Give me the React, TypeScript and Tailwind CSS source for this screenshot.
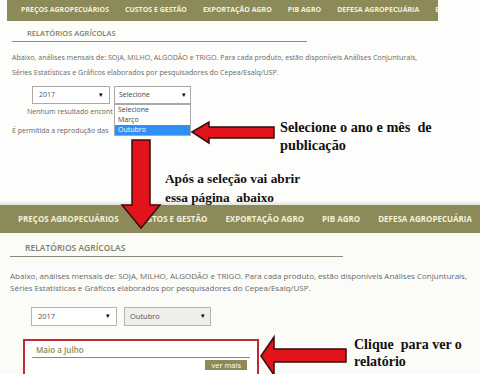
export default function App() {
  const nav = ['PREÇOS AGROPECUÁRIOS', 'CUSTOS E GESTÃO', 'EXPORTAÇÃO AGRO', 'PIB AGRO', 'DEFESA AGROPECUÁRIA']
  const sans = { fontFamily: '"Open Sans", "Noto Sans", sans-serif' }
  const serif = { fontFamily: '"Liberation Serif", "Times New Roman", serif' }

  return (
    <div className="relative w-[480px] h-[374px] overflow-hidden bg-[#fdfdfc]" style={sans}>
      {/* primeira tela */}
      <div className="relative h-[200px]">
        <div className="ml-[7px] w-[431px] h-[21px] bg-[#8b8a58] flex items-center pl-[14px] gap-[16px] overflow-hidden">
          {nav.map(n => (
            <span key={n} className="text-[7px] font-bold text-[#f3f1dc] whitespace-nowrap">{n}</span>
          ))}
          <span className="text-[7px] font-bold text-[#f3f1dc]">E</span>
        </div>
        <div className="ml-[12px] w-[295px] border-b border-[#8d8c78] pl-[15px] pt-[7px] pb-[3px] text-[7.5px] leading-[10px] font-semibold text-[#7d7c62]">
          RELATÓRIOS AGRÍCOLAS
        </div>
        <p className="ml-[12px] mt-[8px] text-[7.1px] leading-[15px] text-[#6a6a6a] whitespace-nowrap">
          Abaixo, análises mensais de: SOJA, MILHO, ALGODÃO e TRIGO. Para cada produto, estão disponíveis Análises Conjunturais,<br />
          Séries Estatísticas e Gráficos elaborados por pesquisadores do Cepea/Esalq/USP.
        </p>
        <div className="ml-[32px] mt-[6px] flex gap-[4px]">
          <div className="w-[78px] h-[18px] border border-[#a9a9a9] bg-white flex items-center justify-between px-[6px]">
            <span className="text-[7px] text-[#555]">2017</span>
            <span className="text-[7px] text-black">▾</span>
          </div>
          <div className="w-[77px] h-[18px] border border-[#a9a9a9] bg-white flex items-center justify-between px-[4px]">
            <span className="text-[7px] text-[#444]">Selecione</span>
            <span className="text-[7px] text-black">▾</span>
          </div>
        </div>
        <div className="ml-[27px] mt-[3px] w-[87px] overflow-hidden text-[7px] leading-[10px] text-[#666] whitespace-nowrap">Nenhum resultado encont</div>
        <div className="ml-[12px] mt-[9px] w-[102px] overflow-hidden text-[7px] leading-[10px] text-[#666] whitespace-nowrap">É permitida a reprodução das</div>

        {/* lista aberta do select */}
        <div className="absolute left-[114px] top-[104px] w-[77px] border border-[#a9a9a9] bg-white text-[7px] leading-[10px]">
          <div className="px-[3px] text-[#444]">Selecione</div>
          <div className="px-[3px] text-[#444]">Março</div>
          <div className="px-[3px] bg-[#2f8ff2] text-white">Outubro</div>
        </div>

        <p className="absolute left-[280px] top-[118px] text-[14.3px] leading-[18px] font-bold text-[#111] whitespace-nowrap" style={serif}>
          Selecione o ano e mês&nbsp; de<br />publicação
        </p>
        <p className="absolute left-[165px] top-[169px] text-[13.3px] leading-[19px] font-bold text-[#111] whitespace-nowrap" style={serif}>
          Após a seleção vai abrir<br />essa página&nbsp; abaixo
        </p>
      </div>
      <div className="h-[5px] bg-gradient-to-b from-[#fdfdfc] to-[#e4e4df]" />

      {/* segunda tela */}
      <div className="bg-[#fbfbf8] h-[169px]">
        <div className="h-[28px] bg-[#8b8a58] flex items-center pl-[18px] gap-[18px] overflow-hidden">
          {nav.map(n => (
            <span key={n} className="text-[8px] font-bold text-[#f3f1dc] whitespace-nowrap">{n}</span>
          ))}
        </div>
        <div className="ml-[10px] w-[333px] border-b border-[#8d8c78] pl-[15px] pt-[9px] pb-[3px] text-[8.5px] leading-[11px] font-semibold text-[#7d7c62]">
          RELATÓRIOS AGRÍCOLAS
        </div>
        <p className="ml-[10px] mt-[13px] text-[8px] leading-[12px] text-[#6a6a6a] whitespace-nowrap">
          Abaixo, análises mensais de: SOJA, MILHO, ALGODÃO e TRIGO. Para cada produto, estão disponíveis Análises Conjunturais,<br />
          Séries Estatísticas e Gráficos elaborados por pesquisadores do Cepea/Esalq/USP.
        </p>
        <div className="ml-[31px] mt-[13px] flex gap-[7px]">
          <div className="w-[86px] h-[19px] border border-[#b5b5b0] bg-white flex items-center justify-between px-[6px]">
            <span className="text-[7.5px] text-[#555]">2017</span>
            <span className="text-[7px] text-black">▾</span>
          </div>
          <div className="w-[87px] h-[19px] border border-[#b5b5b0] bg-[#eeeeea] flex items-center justify-between px-[5px]">
            <span className="text-[7.5px] text-[#555]">Outubro</span>
            <span className="text-[7px] text-black">▾</span>
          </div>
        </div>
        <div className="ml-[23px] mt-[13px] w-[236px] h-[40px] border-2 border-[#c0292f] bg-white px-[7px] pt-[3px]">
          <div className="border-b border-[#8d8c78] pl-[4px] pb-[2px] text-[8px] leading-[11px] font-semibold text-[#8b8a58]">
            Maio a Julho
          </div>
          <div className="flex justify-end mt-[2px] pr-[3px]">
            <span className="bg-[#8b8a58] text-white text-[7.5px] leading-[10px] px-[6px]">ver mais</span>
          </div>
        </div>
      </div>

      <p className="absolute left-[354px] top-[336px] text-[14px] leading-[17px] font-bold text-[#111] whitespace-nowrap" style={serif}>
        Clique&nbsp; para ver o<br />relatório
      </p>

      {/* setas */}
      <svg className="absolute left-0 top-0" width="480" height="374" viewBox="0 0 480 374">
        <polygon points="192,132 209,122 209,127 274,127 274,138 209,138 209,143" fill="#e0141a" stroke="#3a0b0b" strokeWidth="1.5" strokeLinejoin="miter" />
        <polygon points="132,140 150,140 150,205 160,205 141,228 122,205 132,205" fill="#e0141a" stroke="#3a0b0b" strokeWidth="1.5" />
        <polygon points="261,356 274,337 274,349 346,349 346,362 274,362 274,375" fill="#e0141a" stroke="#3a0b0b" strokeWidth="1.5" />
      </svg>
    </div>
  )
}
